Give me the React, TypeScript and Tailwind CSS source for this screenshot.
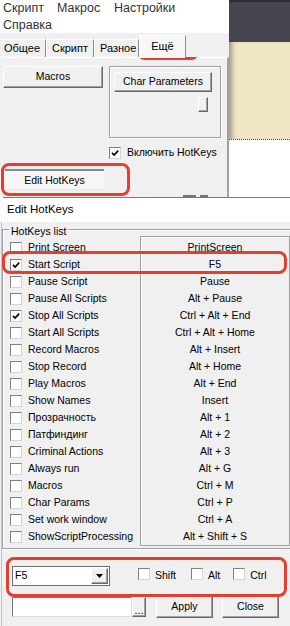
import React from "react";

/* ─── Data ───────────────────────────────────────────────────────────────────── */

const hotkeys: [string, string, boolean][] = [
  ["Print Screen", "PrintScreen", false],
  ["Start Script", "F5", true],
  ["Pause Script", "Pause", false],
  ["Pause All Scripts", "Alt + Pause", false],
  ["Stop All Scripts", "Ctrl + Alt + End", true],
  ["Start All Scripts", "Ctrl + Alt + Home", false],
  ["Record Macros", "Alt + Insert", false],
  ["Stop Record", "Alt + Home", false],
  ["Play Macros", "Alt + End", false],
  ["Show Names", "Insert", false],
  ["Прозрачность", "Alt + 1", false],
  ["Патфиндинг", "Alt + 2", false],
  ["Criminal Actions", "Alt + 3", false],
  ["Always run", "Alt + G", false],
  ["Macros", "Ctrl + M", false],
  ["Char Params", "Ctrl + P", false],
  ["Set work window", "Ctrl + A", false],
  ["ShowScriptProcessing", "Alt + Shift + S", false],
];

const raised =
  "border border-t-white border-l-white border-r-[#696969] border-b-[#696969] shadow-[inset_-1px_-1px_0_#a0a0a0] bg-[#f0f0f0]";
const sunken =
  "border border-t-[#7a7a7a] border-l-[#7a7a7a] border-r-[#dcdcdc] border-b-[#dcdcdc] bg-white";

/* ─── Small controls ─────────────────────────────────────────────────────────── */

function Check({ checked = false }: { checked?: boolean }) {
  return (
    <span className="relative inline-block h-[12px] w-[12px] shrink-0 border border-t-[#808080] border-l-[#808080] border-r-[#d4d4d4] border-b-[#d4d4d4] bg-white">
      {checked && (
        <svg viewBox="0 0 10 10" className="absolute left-0 top-0 h-[10px] w-[10px]">
          <path d="M2 4.8 L4.1 7 L8.2 2.6" fill="none" stroke="#000" strokeWidth="1.7" />
        </svg>
      )}
    </span>
  );
}

function RedBox({ className }: { className: string }) {
  return <div className={`pointer-events-none absolute rounded-[8px] border-[3px] border-[#e53d30] ${className}`} />;
}

/* ─── Main window (top) ──────────────────────────────────────────────────────── */

function MainWindow() {
  return (
    <div className="flex w-[229px] flex-col">
      {/* Menu */}
      <div className="h-[33px] bg-white text-[12.5px] text-[#333]">
        <div className="flex h-[17px] items-center pl-[3px]">
          <span className="w-[54px]">Скрипт</span>
          <span className="w-[57px]">Макрос</span>
          <span>Настройки</span>
        </div>
        <div className="flex h-[16px] items-center pl-[3px]">
          <span>Справка</span>
        </div>
      </div>

      {/* Tabs */}
      <div className="relative z-10 flex h-[24px] items-end bg-[#f0f0f0] text-[11px]">
        <div className="flex h-[18px] w-[46px] items-center border-t border-t-white border-r border-r-[#8c8c8c] pl-[4px]">Общее</div>
        <div className="flex h-[18px] w-[48px] items-center border-t border-l border-t-white border-l-white border-r border-r-[#8c8c8c] pl-[5px]">Скрипт</div>
        <div className="flex h-[18px] w-[45px] items-center border-t border-l border-t-white border-l-white border-r border-r-[#8c8c8c] pl-[5px]">Разное</div>
        <div className="-mb-px flex h-[23px] w-[47px] items-center justify-center border-t border-l border-t-white border-l-white border-r border-r-[#8c8c8c] bg-[#f7f7f7] pb-[2px]">
          Ещё
        </div>
      </div>

      {/* Panel */}
      <div className="relative flex-1 border-t border-t-white border-r-2 border-r-[#a0a0a0] bg-[#f0f0f0] text-[10.5px]">
        <div className="flex pl-[3px] pt-[8px]">
          <div className="w-[100px]">
            <div className={`flex h-[22px] w-[100px] items-center justify-center ${raised}`}>Macros</div>
            <div className="ml-[2px] mt-[81px] flex h-[21px] w-[99px] items-center justify-center border-t-2 border-t-[#8a8a8a] border-b border-b-[#e6e6e6] bg-[#f6f6f6] pt-px">
              Edit HotKeys
            </div>
          </div>
          <div className="ml-[6px] w-[112px]">
            <div className="h-[72px] border border-[#a0a0a0] shadow-[inset_1px_1px_0_#fff,1px_1px_0_#fff]">
              <div className={`ml-[4px] mt-[5px] flex h-[20px] w-[98px] items-center justify-center ${raised}`}>
                Char Parameters
              </div>
              <div className={`ml-[88px] mt-[5px] h-[15px] w-[10px] ${raised}`} />
            </div>
            <div className="mt-[7px] flex items-center">
              <Check checked />
              <span className="ml-[6px]">Включить HotKeys</span>
            </div>
          </div>
        </div>
        <div className="absolute left-[183px] top-[137px] h-[3px] w-[13px] bg-[#767676]" />
        <div className="absolute left-[200px] top-[137px] h-[3px] w-[8px] bg-[#767676]" />
      </div>
    </div>
  );
}

function Desktop() {
  return (
    <div className="flex flex-1 flex-col">
      <div className="h-[42px] border-t-2 border-t-[#2e2e36] bg-[#45454f]" />
      <div className="h-[97px] bg-[#f1e7c5] shadow-[inset_6px_0_5px_-3px_rgba(0,0,0,0.35)]" />
      <div className="flex-1 border-t border-dotted border-t-[#444] bg-white" />
    </div>
  );
}

/* ─── Edit HotKeys dialog ────────────────────────────────────────────────────── */

function HotKeysDialog() {
  return (
    <div className="h-[429px] bg-white">
      <div className="ml-[3px] flex h-[25px] items-center border-t border-t-[#8068c0] pl-[4px] text-[11.5px]">Edit HotKeys</div>

      <div className="flex h-[404px]">
        <div className="w-[3px] bg-[#f0f0f0]">
          <div className="ml-[1px] h-full w-px bg-[#cfc49c]" />
        </div>
        <div className="flex-1 bg-[#f0f0f0] pt-[7px] text-[10.5px]">
          {/* Group box */}
          <div className="relative h-[320px] w-[300px] border border-[#a0a0a0] shadow-[inset_1px_1px_0_#fff,1px_1px_0_#fff]">
            <span className="absolute left-[6px] top-[-5px] bg-[#f0f0f0] px-[2px] leading-[13px]">HotKeys list</span>
            <div className="flex">
              <div className="w-[137px] pt-[9px]">
                {hotkeys.map(([name, , on]) => (
                  <div key={name} className="flex h-[17px] items-center pl-[7px]">
                    <Check checked={on} />
                    <span className="ml-[6px] whitespace-nowrap">{name}</span>
                  </div>
                ))}
              </div>
              <div className="mt-[6px] h-[310px] w-[150px] border border-[#a0a0a0] pt-[2px] shadow-[inset_1px_1px_0_#fff]">
                {hotkeys.map(([name, key]) => (
                  <div key={name} className="flex h-[17px] items-center justify-center whitespace-nowrap">
                    {key}
                  </div>
                ))}
              </div>
            </div>
          </div>

          {/* Key + modifiers */}
          <div className="mt-[17px] flex items-center pl-[10px]">
            <div className="flex h-[20px] w-[98px] items-center border border-[#6e6e6e] bg-white">
              <span className="flex-1 pl-[2px]">F5</span>
              <div className={`mr-px flex h-[16px] w-[17px] items-center justify-center ${raised}`}>
                <svg viewBox="0 0 7 4" className="h-[4px] w-[7px]">
                  <path d="M0 0 H7 L3.5 4 Z" fill="#000" />
                </svg>
              </div>
            </div>
            <span className="ml-[28px]"><Check /></span>
            <span className="ml-[5px]">Shift</span>
            <span className="ml-[15px]"><Check /></span>
            <span className="ml-[5px]">Alt</span>
            <span className="ml-[13px]"><Check /></span>
            <span className="ml-[5px]">Ctrl</span>
          </div>

          {/* Path + actions */}
          <div className="mt-[10px] flex items-start pl-[10px]">
            <div className={`mt-px h-[20px] w-[120px] ${sunken}`} />
            <div className={`mt-px flex h-[20px] w-[14px] items-end justify-center pb-[1px] leading-[10px] ${raised}`}>...</div>
            <div className={`ml-[10px] flex h-[22px] w-[57px] items-center justify-center ${raised}`}>Apply</div>
            <div className={`ml-[9px] flex h-[22px] w-[57px] items-center justify-center ${raised}`}>Close</div>
          </div>
        </div>
      </div>
    </div>
  );
}

/* ─── Page ───────────────────────────────────────────────────────────────────── */

export default function App() {
  return (
    <div className="relative h-[626px] w-[290px] overflow-hidden bg-white font-['Liberation_Sans',Arial,sans-serif] text-black">
      <div className="flex h-[197px]">
        <MainWindow />
        <Desktop />
      </div>
      <HotKeysDialog />

      <RedBox className="left-[137px] top-[33px] h-[27px] w-[62px]" />
      <RedBox className="left-[1px] top-[163px] h-[33px] w-[129px]" />
      <RedBox className="left-[2px] top-[251px] h-[23px] w-[285px]" />
      <RedBox className="left-[6px] top-[557px] h-[40px] w-[281px]" />
    </div>
  );
}
